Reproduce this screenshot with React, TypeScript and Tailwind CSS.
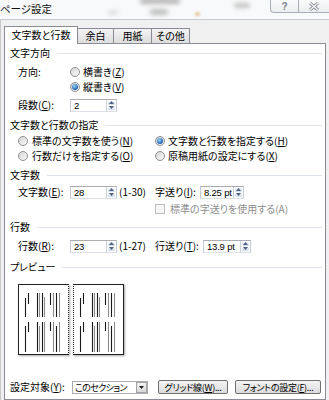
import React from "react";

function U({ c }: { c: string }) {
  return (
    <>
      (<span className="underline underline-offset-[1px]">{c}</span>)
    </>
  );
}

function Radio({ on }: { on?: boolean }) {
  return (
    <span className="flex h-[10px] w-[10px] shrink-0 items-center justify-center rounded-full border border-[#8e8f8f] bg-[linear-gradient(135deg,#d4d4d4,#fbfbfb)]">
      {on && (
        <span className="h-[6px] w-[6px] rounded-full bg-[radial-gradient(circle_at_40%_35%,#9ad8ff,#1a5cb0_70%)]" />
      )}
    </span>
  );
}

function Spin() {
  return (
    <div className="flex w-[10px] shrink-0 flex-col gap-px border-l border-[#c9d1db] bg-white p-px">
      <div className="flex flex-1 items-center justify-center rounded-[1px] bg-gradient-to-b from-[#eef2f7] to-[#d3dce8]">
        <svg width="5" height="3" viewBox="0 0 5 3">
          <path d="M0 3 L2.5 0 L5 3Z" fill="#4d6185" />
        </svg>
      </div>
      <div className="flex flex-1 items-center justify-center rounded-[1px] bg-gradient-to-b from-[#eef2f7] to-[#d3dce8]">
        <svg width="5" height="3" viewBox="0 0 5 3">
          <path d="M0 0 L2.5 3 L5 0Z" fill="#4d6185" />
        </svg>
      </div>
    </div>
  );
}

function Num({ v, w }: { v: string; w: string }) {
  return (
    <div
      className={`flex h-[13px] shrink-0 items-stretch border border-[#abadb3] border-b-[#dbdfe6] border-l-[#c5cad2] border-r-[#c5cad2] bg-white ${w}`}
    >
      <span className="flex-1 overflow-hidden whitespace-nowrap pl-[3px] font-['Liberation_Sans',sans-serif] text-[9.5px] leading-[11px] tracking-[-0.2px]">
        {v}
      </span>
      <Spin />
    </div>
  );
}

function Heading({ t, cls }: { t: string; cls: string }) {
  return (
    <div className={`flex h-[16px] items-center pl-[5px] pr-[3px] ${cls}`}>
      <span className="whitespace-nowrap">{t}</span>
      <div className="ml-[7px] h-px flex-1 bg-[#dde3e9]" />
    </div>
  );
}

type L = [number, number, number, "k" | "g"];
const LINES: L[] = [
  [6, 13, 32, "k"],
  [9, 8, 19, "k"],
  [18, 8, 32, "k"],
  [20, 8, 32, "g"],
  [23, 8, 32, "k"],
  [25, 12, 32, "g"],
  [31, 8, 20, "k"],
  [34, 8, 32, "g"],
  [37, 8, 32, "k"],
  [40, 8, 32, "g"],
  [6, 41, 67, "k"],
  [9, 37, 47, "k"],
  [18, 37, 67, "k"],
  [20, 41, 67, "g"],
  [23, 37, 67, "k"],
  [25, 37, 67, "g"],
  [31, 37, 46, "k"],
  [34, 37, 67, "g"],
  [37, 41, 67, "k"],
  [40, 37, 67, "g"],
];

function Page({ cls }: { cls: string }) {
  return (
    <div
      className={`h-[71px] w-[51px] border border-[#222] bg-white shadow-[1px_1px_2px_rgba(0,0,0,0.35)] ${cls}`}
    >
      <svg width="49" height="69" viewBox="0 0 49 69">
        {LINES.map(([x, y1, y2, c], i) => (
          <line
            key={i}
            x1={x + 0.5}
            x2={x + 0.5}
            y1={y1}
            y2={y2}
            stroke={c === "k" ? "#1a1a1a" : "#8c8c8c"}
            strokeWidth="1.1"
          />
        ))}
      </svg>
    </div>
  );
}

export default function App() {
  return (
    <div className="flex h-[400px] w-[329px] flex-col overflow-hidden whitespace-nowrap bg-white font-['Noto_Sans_CJK_JP','Noto_Sans',sans-serif] text-[10px] leading-none text-black [font-feature-settings:'palt']">
      {/* title bar */}
      <div className="relative flex h-[20px] shrink-0 border-b border-[#c8cbd0] bg-[#f8f9fa]">
        <div className="absolute left-[140px] top-[-2px] h-[6px] w-[40px] rounded-full bg-[#b8b8b8] blur-[2px]" />
        <div className="absolute left-[150px] top-[9px] h-[6px] w-[18px] rounded-full bg-[#c0c0c0] blur-[2px]" />
        <div className="absolute left-[108px] top-[11px] h-[3px] w-[10px] rounded-full bg-[#d0d0d0] blur-[2px]" />
        <div className="absolute left-[195px] top-[12px] h-[4px] w-[5px] rounded-full bg-[#e8c89a] blur-[1px]" />
        <div className="absolute left-[234px] top-[3px] h-[5px] w-[16px] rounded-full bg-[#c4c4c4] blur-[2px]" />
        <span className="relative pt-[3px] text-[10.5px] leading-[12px] text-[#111]">ページ設定</span>
        <div className="relative ml-auto flex h-[13px]">
          <div className="flex w-[28px] items-center justify-center rounded-bl-[4px] border-b border-l border-[#a7aeb8] bg-gradient-to-b from-[#fafafa] to-[#eceef1]">
            <span className="font-['Liberation_Sans',sans-serif] text-[10px] font-bold leading-[11px] text-[#7c838c]">?</span>
          </div>
          <div className="flex w-[31px] items-center justify-center border-b border-l border-[#a7aeb8] bg-gradient-to-b from-[#fafafa] to-[#eceef1]">
            <svg width="12" height="9" viewBox="0 0 12 9">
              <path d="M2 1 L10 8 M10 1 L2 8" stroke="#8a9098" strokeWidth="3" />
              <path d="M2 1 L10 8 M10 1 L2 8" stroke="#f6f6f6" strokeWidth="1.2" />
            </svg>
          </div>
        </div>
      </div>

      {/* body */}
      <div className="flex flex-1 flex-col border-l border-[#c9c9c9] bg-[#f0f0f0] pl-[3px] pr-[3px] pt-[6px]">
        {/* tabs */}
        <div className="flex h-[17px] shrink-0 items-end">
          <div className="relative z-10 -mb-px flex h-[18px] w-[74px] items-start justify-center border-l border-r border-t border-[#898c95] bg-white pt-[3px]">
            文字数と行数
          </div>
          <div className="flex h-[15px] w-[36px] items-center justify-center border-r border-t border-[#898c95] bg-gradient-to-b from-[#f3f3f3] to-[#dedede]">
            余白
          </div>
          <div className="flex h-[15px] w-[38px] items-center justify-center border-r border-t border-[#898c95] bg-gradient-to-b from-[#f3f3f3] to-[#dedede]">
            用紙
          </div>
          <div className="flex h-[15px] w-[38px] items-center justify-center border-r border-t border-[#898c95] bg-gradient-to-b from-[#f3f3f3] to-[#dedede]">
            その他
          </div>
        </div>

        {/* panel */}
        <div className="flex flex-1 flex-col border border-[#898c95] bg-white">
          <Heading t="文字方向" cls="mt-px" />
          <div className="mt-[3px] flex h-[16px] items-center pl-[13px]">
            <span className="w-[52px]">方向:</span>
            <Radio />
            <span className="ml-[3px]">
              横書き<U c="Z" />
            </span>
          </div>
          <div className="-mt-px flex h-[16px] items-center pl-[65px]">
            <Radio on />
            <span className="ml-[3px]">
              縦書き<U c="V" />
            </span>
          </div>
          <div className="mt-[2px] flex h-[16px] items-center pl-[13px]">
            <span className="w-[52px]">
              段数<U c="C" />:
            </span>
            <Num v="2" w="w-[47px]" />
          </div>

          <Heading t="文字数と行数の指定" cls="mt-[4px]" />
          <div className="flex h-[16px] items-center pl-[13px]">
            <div className="flex w-[137px] items-center">
              <Radio />
              <span className="ml-[4px]">
                標準の文字数を使う<U c="N" />
              </span>
            </div>
            <Radio on />
            <span className="ml-[3px]">
              文字数と行数を指定する<U c="H" />
            </span>
          </div>
          <div className="-mt-px flex h-[16px] items-center pl-[13px]">
            <div className="flex w-[137px] items-center">
              <Radio />
              <span className="ml-[4px]">
                行数だけを指定する<U c="O" />
              </span>
            </div>
            <Radio />
            <span className="ml-[3px]">
              原稿用紙の設定にする<U c="X" />
            </span>
          </div>

          <Heading t="文字数" cls="mt-[3px]" />
          <div className="mt-px flex h-[16px] items-center pl-[13px]">
            <div className="flex w-[137px] items-center">
              <span className="w-[52px]">
                文字数<U c="E" />:
              </span>
              <Num v="28" w="w-[47px]" />
              <span className="ml-[2px]">(1-30)</span>
            </div>
            <span className="w-[45px]">
              字送り<U c="I" />:
            </span>
            <Num v="8.25 pt" w="w-[44px]" />
          </div>
          <div className="mt-px flex h-[16px] items-center pl-[150px]">
            <span className="h-[10px] w-[10px] shrink-0 border border-[#bcbcbc] bg-[#f6f6f6]" />
            <span className="ml-[5px] text-[#8d8d8d]">標準の字送りを使用する(A)</span>
          </div>

          <Heading t="行数" cls="mt-[2px]" />
          <div className="mt-[3px] flex h-[16px] items-center pl-[13px]">
            <div className="flex w-[137px] items-center">
              <span className="w-[52px]">
                行数<U c="R" />:
              </span>
              <Num v="23" w="w-[47px]" />
              <span className="ml-[2px]">(1-27)</span>
            </div>
            <span className="w-[48px]">
              行送り<U c="T" />:
            </span>
            <Num v="13.9 pt" w="w-[48px]" />
          </div>

          <Heading t="プレビュー" cls="mt-[5px]" />
          <div className="mt-[9px] flex gap-[4px] pl-[13px]">
            <Page cls="[border-right-style:dotted]" />
            <Page cls="[border-left-style:dotted]" />
          </div>

          <div className="mt-[24px] flex h-[16px] items-center pl-[5px]">
            <span className="w-[62px]">
              設定対象<U c="Y" />:
            </span>
            <div className="flex h-[13px] w-[76px] items-stretch border border-[#abadb3] bg-white">
              <span className="flex-1 whitespace-nowrap pl-[2px] text-[9px] leading-[11px] tracking-[-0.6px]">
                このセクション
              </span>
              <div className="flex w-[11px] shrink-0 items-center justify-center border border-[#a3a3a3] bg-gradient-to-b from-[#f4f4f4] to-[#d9d9d9]">
                <svg width="5" height="3" viewBox="0 0 5 3">
                  <path d="M0 0 L2.5 3 L5 0Z" fill="#222" />
                </svg>
              </div>
            </div>
            <div className="ml-[10px] flex h-[14px] w-[70px] items-center justify-center rounded-[2px] border border-[#707070] bg-gradient-to-b from-[#f4f4f4] to-[#dcdcdc] text-[9px] tracking-[-0.3px]">
              グリッド線<U c="W" />...
            </div>
            <div className="ml-[7px] flex h-[14px] w-[86px] items-center justify-center rounded-[2px] border border-[#707070] bg-gradient-to-b from-[#f4f4f4] to-[#dcdcdc] text-[9px] tracking-[-0.3px]">
              フォントの設定<U c="F" />...
            </div>
          </div>
        </div>
      </div>
    </div>
  );
}
